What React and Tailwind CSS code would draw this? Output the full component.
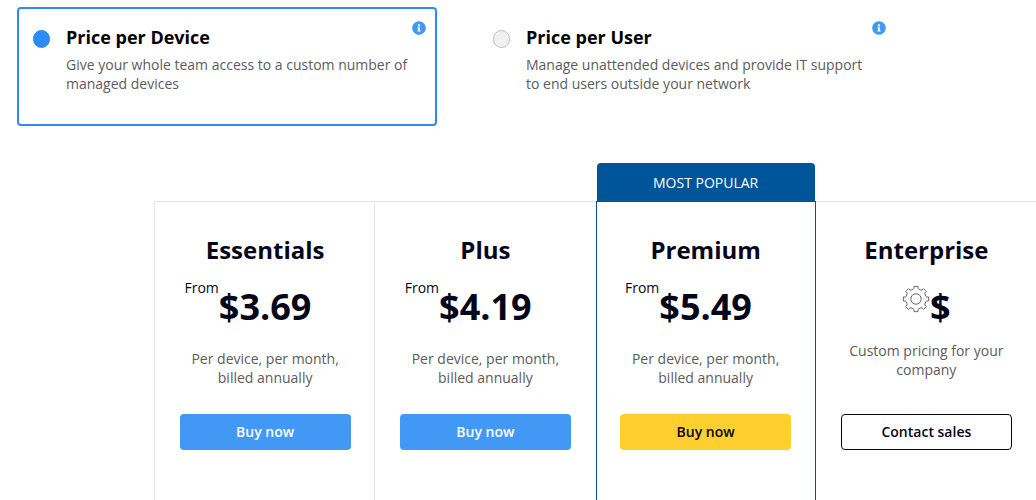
import { useState } from "react";
import { FaInfoCircle } from "react-icons/fa";

const MODELS = [
  {
    id: "device",
    title: "Price per Device",
    text: "Give your whole team access to a custom number of managed devices",
  },
  {
    id: "user",
    title: "Price per User",
    text: "Manage unattended devices and provide IT support to end users outside your network",
  },
];

const PLANS = [
  { name: "Essentials", price: "3.69", frame: "border-t border-r border-[#e6e6e6] pr-5 pl-[21px]" },
  { name: "Plus", price: "4.19", frame: "border-t border-[#e6e6e6] px-5" },
  { name: "Premium", price: "5.49", popular: true, frame: "border-x border-t border-[#005499] px-5" },
  { name: "Enterprise", frame: "border-t border-[#e6e6e6] pr-5 pl-[21px]" },
];

function gearPath() {
  const points = [];
  for (let i = 0; i < 8; i++) {
    const base = i * 45 - 90;
    [
      [-15, 10.2],
      [-11, 10.8],
      [-9, 12.8],
      [9, 12.8],
      [11, 10.8],
      [15, 10.2],
    ].forEach(([offset, radius]) => {
      const angle = ((base + offset) * Math.PI) / 180;
      points.push(
        `${(14 + radius * Math.cos(angle)).toFixed(2)} ${(14 + radius * Math.sin(angle)).toFixed(2)}`
      );
    });
  }
  return `M${points.join("L")}Z`;
}

function Gear() {
  return (
    <svg viewBox="0 0 28 28" className="mt-[3px] size-7" fill="none" stroke="#666" strokeWidth="1" strokeLinejoin="round" aria-hidden="true">
      <path d={gearPath()} />
      <circle cx="14" cy="14" r="5.2" />
    </svg>
  );
}

function ModelCard({ model, selected, onSelect }) {
  return (
    <div
      className={`flex min-h-[119px] w-[420px] items-start rounded border-2 pt-3 pr-[9px] pl-3.5 ${
        selected ? "border-[#2a8cf4]" : "border-transparent"
      }`}
    >
      <input
        type="radio"
        name="model"
        id={model.id}
        checked={selected}
        onChange={onSelect}
        className="mt-[9px] h-[18px] w-[17px] shrink-0 appearance-none rounded-full border border-[#bfbfbf] bg-[#f0f0f0] checked:border-[#2a8cf4] checked:bg-[#2a8cf4]"
      />
      <label htmlFor={model.id} className="ml-4 min-w-0 flex-1 pt-1">
        <span className="block text-lg leading-6 font-bold text-black">{model.title}</span>
        <span className="mt-1.5 block text-sm leading-[19px] text-[#5c5c5c]">{model.text}</span>
      </label>
      <button type="button" aria-label={`About ${model.title}`} className="text-[#4199f5]">
        <FaInfoCircle className="size-3.5" />
      </button>
    </div>
  );
}

function Plan({ plan }) {
  const button = plan.popular
    ? "bg-[#ffcf30]"
    : plan.price
      ? "bg-[#4199f5] text-white"
      : "border border-[#050519]";
  return (
    <article className="flex flex-col text-center">
      <div className="flex h-[38px] flex-col px-px">
        {plan.popular && (
          <p className="flex-1 rounded-t bg-[#005499] pt-px text-sm leading-[38px] text-white">MOST POPULAR</p>
        )}
      </div>
      <div className={`flex flex-1 flex-col items-center pt-8 ${plan.frame}`}>
        <h2 className="text-2xl leading-8 font-bold">{plan.name}</h2>
        {plan.price ? (
          <p className="relative mt-4 text-4xl leading-[50px] font-bold">
            <span className="absolute -top-1 right-full text-sm leading-[19px] font-normal">From</span>
            ${plan.price}
          </p>
        ) : (
          <p className="mt-4 flex items-start text-4xl leading-[50px] font-bold">
            <Gear />$
          </p>
        )}
        <p className={`${plan.price ? "mt-[17px]" : "mt-[9px]"} w-full px-1 text-sm leading-[19px] text-[#5c5c5c]`}>
          {plan.price ? "Per device, per month, billed annually" : "Custom pricing for your company"}
        </p>
        <button
          type="button"
          className={`${plan.price ? "mt-[27px]" : "mt-[35px]"} h-9 w-[171px] max-w-full rounded text-sm font-semibold ${button}`}
        >
          {plan.price ? "Buy now" : "Contact sales"}
        </button>
      </div>
    </article>
  );
}

export default function App() {
  const [model, setModel] = useState("device");
  return (
    <main className="flex min-h-screen flex-col bg-white font-['Open_Sans',sans-serif] text-[#050519]">
      <fieldset aria-label="Pricing model" className="flex flex-wrap gap-10 pt-[7px] pl-[17px]">
        {MODELS.map((m) => (
          <ModelCard key={m.id} model={m} selected={model === m.id} onSelect={() => setModel(m.id)} />
        ))}
      </fieldset>
      <section className="mt-[37px] ml-[154px] flex flex-1">
        <div className="mt-[38px] w-px bg-[#e6e6e6]" />
        <div className="grid flex-1 grid-cols-4">
          {PLANS.map((plan) => (
            <Plan key={plan.name} plan={plan} />
          ))}
        </div>
      </section>
    </main>
  );
}
